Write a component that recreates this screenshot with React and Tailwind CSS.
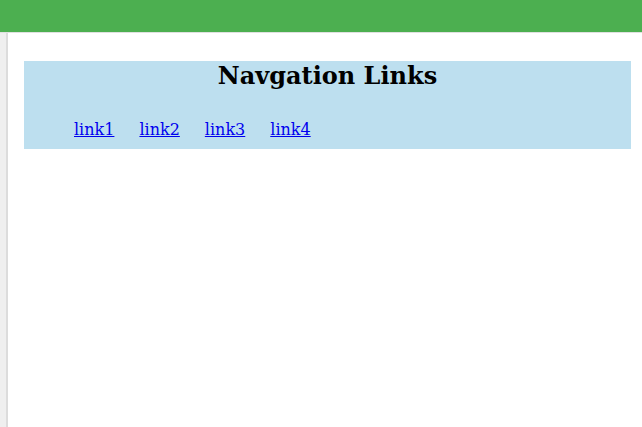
export default function App() {
  const links = ["link1", "link2", "link3", "link4"];
  return (
    <div className="w-[642px] h-[427px] flex flex-col bg-white overflow-hidden" style={{ fontFamily: '"DejaVu Serif", serif' }}>
      <div className="h-[32px] bg-[#4caf50] shrink-0" />
      <div className="h-px bg-[#e0e0e0] shrink-0" />
      <div className="flex flex-1">
        <div className="w-[8px] shrink-0 flex">
          <div className="w-[6px] bg-[#efefef]" />
          <div className="w-[2px] bg-[#dcdcdc]" />
        </div>
        <div className="flex-1 pt-[28px] pl-[16px] pr-[11px]">
          <div className="bg-[#bddfef] h-[88px] flex flex-col">
            <h2 className="mt-[1px] text-[24px] leading-[28px] font-bold text-center text-black">Navgation Links</h2>
            <ul className="mt-[30px] pl-[40px] text-[16px] leading-[19px] flex gap-[5px]">
              {links.map((l) => (
                <li key={l} className="px-[10px]">
                  <a href="#" className="text-[#0000ee] underline">{l}</a>
                </li>
              ))}
            </ul>
          </div>
        </div>
      </div>
    </div>
  );
}
